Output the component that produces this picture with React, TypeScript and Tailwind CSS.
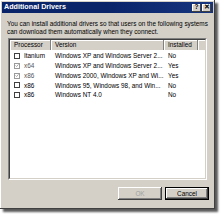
import React from "react";

type Row = {
  processor: string;
  version: string;
  installed: string;
  checked: boolean;
};

const ROWS: Row[] = [
  { processor: "Itanium", version: "Windows XP and Windows Server 2...", installed: "No", checked: false },
  { processor: "x64", version: "Windows XP and Windows Server 2...", installed: "Yes", checked: true },
  { processor: "x86", version: "Windows 2000, Windows XP and Wi...", installed: "Yes", checked: true },
  { processor: "x86", version: "Windows 95, Windows 98, and Win...", installed: "No", checked: false },
  { processor: "x86", version: "Windows NT 4.0", installed: "No", checked: false },
];

function CheckBox({ checked }: { checked: boolean }) {
  return (
    <span
      className={`flex h-[6px] w-[6px] shrink-0 items-center justify-center border bg-white ${
        checked ? "border-[#9a9a9a]" : "border-[#404040]"
      }`}
    >
      {checked && (
        <svg width="5" height="5" viewBox="0 0 5 5">
          <path d="M0.6 2.4 L2 3.8 L4.4 1" fill="none" stroke="#8a8a8a" strokeWidth="0.9" />
        </svg>
      )}
    </span>
  );
}

function HeaderCell({ label, width }: { label: string; width: string }) {
  return (
    <div
      className={`${width} flex h-full items-center border-r border-r-[#808080] pl-[4px] shadow-[inset_1px_1px_0_#ffffff]`}
    >
      {label}
    </div>
  );
}

function TitleButton({ children }: { children: React.ReactNode }) {
  return (
    <span className="flex h-[8px] w-[9px] items-center justify-center bg-[#d4d0c8] text-[6.5px] font-bold leading-none text-black shadow-[inset_-1px_-1px_0_#404040,inset_1px_1px_0_#ffffff]">
      {children}
    </span>
  );
}

export default function App() {
  return (
    <div
      className="h-[214px] w-[222px] bg-white text-[6.4px] text-black"
      style={{ fontFamily: '"Liberation Sans", Arial, sans-serif' }}
    >
      <div className="flex h-[209px] w-[215px] flex-col bg-[#d4d0c8] p-[2px] shadow-[inset_-1px_-1px_0_#404040,inset_1px_1px_0_#ffffff,3px_3px_2px_rgba(0,0,0,0.65)]">
        <div className="flex h-[11px] items-center justify-between bg-gradient-to-r from-[#0a246a] via-[#0a246a] to-[#16357e] pl-[2px] pr-[2px]">
          <span className="text-[7.2px] font-bold text-white">Additional Drivers</span>
          <div className="flex gap-[1px]">
            <TitleButton>?</TitleButton>
            <TitleButton>✕</TitleButton>
          </div>
        </div>

        <p className="mt-[7px] px-[5px] leading-[7.6px]">
          You can install additional drivers so that users on the following systems
          can download them automatically when they connect.
        </p>

        <div className="mx-[6px] mt-[3px] h-[142px] border border-t-[#808080] border-l-[#808080] border-b-white border-r-white">
          <div className="h-full border border-t-[#404040] border-l-[#404040] border-b-[#d4d0c8] border-r-[#d4d0c8] bg-white">
            <div className="flex h-[10px] bg-[#d4d0c8]">
              <HeaderCell label="Processor" width="w-[41px]" />
              <HeaderCell label="Version" width="w-[113px]" />
              <HeaderCell label="Installed" width="w-[34px]" />
              <div className="flex-1 shadow-[inset_1px_1px_0_#ffffff]" />
            </div>
            <div className="flex flex-col pt-[1px]">
              {ROWS.map((row, i) => (
                <div key={i} className="flex h-[9.8px] items-center">
                  <div className="flex w-[41px] items-center gap-[4px] pl-[4px]">
                    <CheckBox checked={row.checked} />
                    <span className={row.checked ? "text-[#555]" : ""}>{row.processor}</span>
                  </div>
                  <div className="w-[113px] pl-[4px]">{row.version}</div>
                  <div className="pl-[4px]">{row.installed}</div>
                </div>
              ))}
            </div>
          </div>
        </div>

        <div className="mt-[7px] flex justify-end gap-[3px] pr-[4px]">
          <button className="flex h-[13px] w-[44px] items-center justify-center bg-[#d4d0c8] text-[#a0a0a0] shadow-[inset_-1px_-1px_0_#404040,inset_1px_1px_0_#ffffff,inset_-2px_-2px_0_#808080]">
            OK
          </button>
          <button className="flex h-[13px] w-[44px] items-center justify-center border border-black bg-[#d4d0c8] shadow-[inset_-1px_-1px_0_#404040,inset_1px_1px_0_#ffffff,inset_-2px_-2px_0_#808080]">
            Cancel
          </button>
        </div>
      </div>
    </div>
  );
}
